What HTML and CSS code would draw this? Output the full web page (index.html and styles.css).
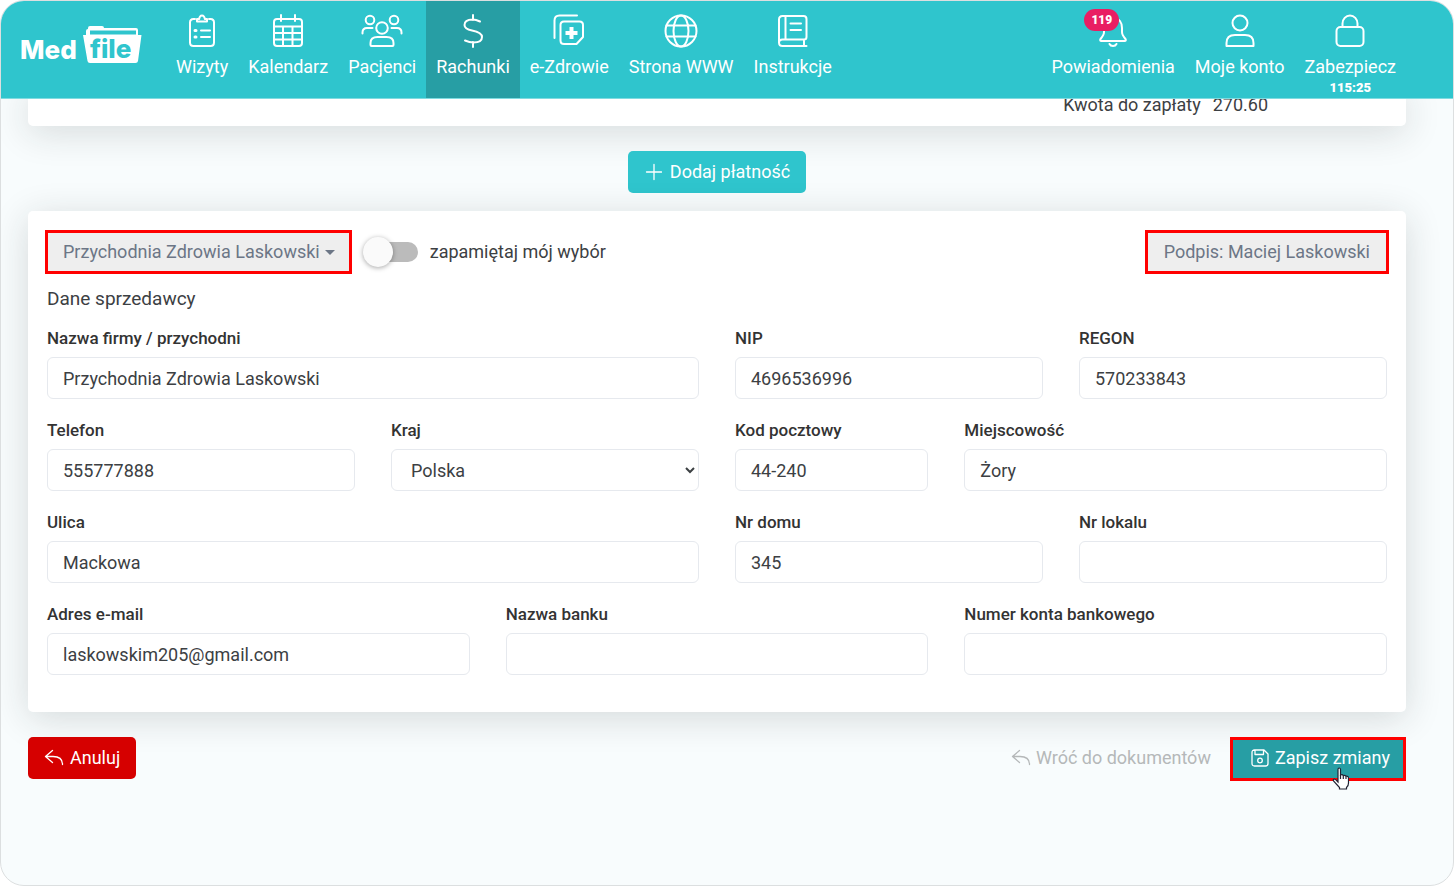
FILE: index.html
```html
<!DOCTYPE html>
<html lang="pl">
<head>
<meta charset="utf-8">
<title>MedFile – Rachunki</title>
<link rel="stylesheet" href="styles.css">
</head>
<body>
<div class="app">
  <header class="topbar">
    <a class="logo" href="#" aria-label="MedFile">
      <svg width="124" height="42" viewBox="0 0 124 42">
        <path fill="#fff" d="M65 11V7q0-2 2-2V4q0-2 2-2h12q2 0 2 2h32q2 0 2 2v5h3.500l-3.500 26q-.3 2-2.500 2H69q-2.200 0-2.500-2L62 11h3z"/>
        <path fill="#2fc5cd" d="M69 6.500h46v4H69z"/>
        <text class="logo-text" x="-1" y="35" fill="#fff">Med</text>
        <text class="logo-text" x="69" y="34" fill="#2fc5cd">file</text>
      </svg>
    </a>
    <nav class="menu">
      <a class="item" href="#">
        <svg class="icon" viewBox="0 0 34 34"><path d="M10 5H8.500Q5 5 5 8.500v20Q5 32 8.500 32h17q3.500 0 3.500-3.500v-20Q29 5 25.500 5H24M12 7.500V5h2.200a2.800 3.400 0 1 1 5.600 0H22v2.500zM16 16.500h9M16 23h9"/><path class="dots" d="M10 16.500h1M10 23h1"/></svg>
        <span>Wizyty</span>
      </a>
      <a class="item" href="#">
        <svg class="icon" viewBox="0 0 34 34"><path d="M10 1v6M24 1v6M6 5h22q3 0 3 3v21q0 3-3 3H6q-3 0-3-3V8q0-3 3-3zM3 12.500h28M3 19h28M3 25.500h28M12 12.500V32M21.500 12.500V32"/></svg>
        <span>Kalendarz</span>
      </a>
      <a class="item" href="#">
        <svg class="icon icon-wide" viewBox="0 0 42 34"><circle cx="9" cy="6" r="4.300"/><circle cx="33" cy="6" r="4.300"/><circle cx="21" cy="14" r="5.800"/><path d="M9.500 31v-2q0-6 7-6h9q7 0 7 6v2q0 1-1 1h-21q-1 0-1-1zM1.500 19.500v-1Q1.500 14 6 14h5.500M40.500 19.500v-1q0-4.500-4.500-4.500h-5.500"/></svg>
        <span>Pacjenci</span>
      </a>
      <a class="item active" href="#">
        <svg class="icon" viewBox="0 0 34 34"><path d="M17 1v5M17 28v5M24 7.500Q20 5.500 16.500 5.500 8.500 5.500 8.500 11q0 4 7.500 5.500Q26 18.500 26 23q0 5.500-8.500 5.500-4 0-8.500-2"/></svg>
        <span>Rachunki</span>
      </a>
      <a class="item" href="#">
        <svg class="icon" viewBox="0 0 34 34"><path d="M2.500 24V6.500q0-5 5-5H25M12 7.500h15.500q3.500 0 3.500 3.500v12L24.500 30H12q-3.500 0-3.500-3.500V11q0-3.500 3.500-3.500z"/><path fill="#fff" stroke="none" d="M17.500 13h4v4h4v4h-4v4h-4v-4h-4v-4h4z"/></svg>
        <span>e-Zdrowie</span>
      </a>
      <a class="item" href="#">
        <svg class="icon" viewBox="0 0 34 34"><circle cx="17" cy="17" r="15.500"/><ellipse cx="17" cy="17" rx="7.500" ry="15.500"/><path d="M2.500 11.500h29M2.500 22.500h29"/></svg>
        <span>Strona WWW</span>
      </a>
      <a class="item" href="#">
        <svg class="icon" viewBox="0 0 34 34"><path d="M30.500 32H6.500Q3 32 3 28.500v-23Q3 2 6.500 2h21Q30.500 2 30.500 5v18q0 2.500-2.500 2.500H6.500Q3 25.500 3 28.500M9.500 2v23.500M28 25.500V32M14.500 9.500H25M14.500 16H25"/></svg>
        <span>Instrukcje</span>
      </a>
    </nav>
    <nav class="menu account">
      <a class="item" href="#">
        <svg class="icon" viewBox="0 0 34 34"><path d="M17 2v2M17 4C10.500 4 8 9 8 14v4q0 3-3.500 7-1 2 1 2h23q2 0 1-2Q26 21 26 18v-4C26 9 23.500 4 17 4zM13.500 30q1 2 3.500 2t3.500-2"/></svg>
        <span class="badge">119</span>
        <span>Powiadomienia</span>
      </a>
      <a class="item" href="#">
        <svg class="icon" viewBox="0 0 34 34"><circle cx="17" cy="9" r="7.500"/><path d="M3.500 32v-3Q3.500 21 12 21h10q8.500 0 8.500 8v3z"/></svg>
        <span>Moje konto</span>
      </a>
      <a class="item" href="#">
        <svg class="icon" viewBox="0 0 34 34"><rect x="3.500" y="13" width="27" height="19" rx="4"/><path d="M9.500 13V9.500a7.500 8 0 0 1 15 0V13"/></svg>
        <span>Zabezpiecz</span>
        <strong class="timer">115:25</strong>
      </a>
    </nav>
  </header>

  <main class="content">
    <section class="card summary"><span>Kwota do zapłaty</span><span>270.60</span></section>

    <button class="btn add" type="button">
      <svg class="small" viewBox="0 0 18 18"><path d="M10 1.500v15M2.500 9h15"/></svg>Dodaj płatność
    </button>

    <form class="card seller">
      <div class="toolbar">
        <button class="choice" type="button">Przychodnia Zdrowia Laskowski<i class="caret"></i></button>
        <label class="remember"><input class="switch" type="checkbox">zapamiętaj mój wybór</label>
        <button class="choice signature" type="button">Podpis: Maciej Laskowski</button>
      </div>
      <h2 class="heading">Dane sprzedawcy</h2>
      <div class="fields">
        <label class="field span6">Nazwa firmy / przychodni<input class="control" type="text" value="Przychodnia Zdrowia Laskowski"></label>
        <label class="field span3">NIP<input class="control" type="text" value="4696536996"></label>
        <label class="field span3">REGON<input class="control" type="text" value="570233843"></label>
        <label class="field span3">Telefon<input class="control" type="tel" value="555777888"></label>
        <label class="field span3">Kraj<select class="control"><option>Polska</option></select></label>
        <label class="field span2">Kod pocztowy<input class="control" type="text" value="44-240"></label>
        <label class="field span4">Miejscowość<input class="control" type="text" value="Żory"></label>
        <label class="field span6">Ulica<input class="control" type="text" value="Mackowa"></label>
        <label class="field span3">Nr domu<input class="control" type="text" value="345"></label>
        <label class="field span3">Nr lokalu<input class="control" type="text"></label>
        <label class="field span4">Adres e-mail<input class="control" type="email" value="laskowskim205@gmail.com"></label>
        <label class="field span4">Nazwa banku<input class="control" type="text"></label>
        <label class="field span4">Numer konta bankowego<input class="control" type="text"></label>
      </div>
    </form>

    <div class="actions">
      <button class="btn cancel" type="button">
        <svg class="small reply" viewBox="0 0 20 18"><path d="M8.500 1.500 1.500 7.500 8.500 13.500M1.500 7.500H9q9.500 0 9.500 8"/></svg>Anuluj
      </button>
      <a class="back" href="#">
        <svg class="small reply" viewBox="0 0 20 18"><path d="M8.500 1.500 1.500 7.500 8.500 13.500M1.500 7.500H9q9.500 0 9.500 8"/></svg>Wróć do dokumentów
      </a>
      <button class="btn save" type="submit">
        <svg class="small" viewBox="0 0 18 18"><path d="M3.500 1H13l4 4v9.500Q17 17 14.500 17h-11Q1 17 1 14.500v-11Q1 1 3.500 1zM4 1v4.500h8.500V1"/><circle cx="9" cy="11.500" r="2.300"/></svg>Zapisz zmiany
        <svg class="pointer" viewBox="0 0 18 23"><path d="M6 14V2.500Q6 1 7.200 1T8.500 2.500V8q2-.8 2.800.5 2-.5 2.700.7 2.500-.4 2.500 2V16q0 3-2 4.500V22H7.500v-1.500L1.500 14q-.8-1.500.7-2 1.200 0 3.800 3z"/><path d="M8.500 8v4M11.300 8.500V12M14 9.200V12"/></svg>
      </button>
    </div>
  </main>
</div>
</body>
</html>
```
FILE: styles.css
```css
* { box-sizing: border-box; }

body {
  margin: 0;
  background: #fff;
  color: #3c4043;
  font-family: Roboto, sans-serif;
  font-size: 18px;
  line-height: 28px;
}

a { color: inherit; text-decoration: none; }
button, input, select { font: inherit; color: inherit; }

.app {
  min-height: 100vh;
  border: 1px solid #dcdfe0;
  border-radius: 24px;
  overflow: hidden;
  background: #f8fcfd;
}

.topbar {
  position: relative;
  z-index: 1;
  display: flex;
  height: 98px;
  padding: 0 47px 0 20px;
  border-bottom: 1px solid #7fdbe0;
  background: #2fc5cd;
  color: #fff;
}

.logo { padding-top: 23px; margin-right: 21px; }
.logo svg { display: block; }
.logo-text { font: 800 26px Inter, sans-serif; }

.menu { display: flex; }
.account { margin-left: auto; }

.item {
  position: relative;
  display: flex;
  flex-direction: column;
  align-items: center;
  padding: 13px 10px 0;
}
.item.active { background: #279ea4; }

.icon {
  width: 34px;
  height: 34px;
  margin-bottom: 5px;
  fill: none;
  stroke: #fff;
  stroke-width: 2;
  stroke-linecap: round;
  stroke-linejoin: round;
}
.icon-wide { width: 42px; }
.dots { stroke-width: 3; }

.badge {
  position: absolute;
  top: 8px;
  left: 43px;
  padding: 0 7px;
  border-radius: 11px;
  background: #e91e63;
  font-size: 12px;
  font-weight: 900;
  line-height: 22px;
}

.timer { font-size: 13px; font-weight: 900; line-height: 14px; }

.content {
  display: flex;
  flex-direction: column;
  padding: 0 47px 0 27px;
}

.card {
  border-radius: 5px;
  background: #fff;
  box-shadow: 0 6px 36px rgba(30, 40, 40, 0.16);
}

.summary {
  display: flex;
  justify-content: flex-end;
  gap: 12px;
  margin-top: -8px;
  padding: 0 138px 7px 20px;
}

.btn {
  display: flex;
  align-items: center;
  gap: 8px;
  height: 42px;
  padding: 0 16px;
  border: 0;
  border-radius: 5px;
  color: #fff;
}

.small {
  width: 18px;
  height: 18px;
  fill: none;
  stroke: currentColor;
  stroke-width: 1.3;
  stroke-linecap: round;
  stroke-linejoin: round;
}
.reply { width: 20px; }

.add {
  align-self: center;
  margin: 25px 0 18px;
  background: #2fc5cd;
}

.seller { padding: 21px 19px 37px; }

.toolbar {
  display: flex;
  align-items: center;
  margin-bottom: 13px;
}

.choice {
  display: flex;
  align-items: center;
  gap: 5px;
  height: 40px;
  padding: 0 14px 0 15px;
  border: 1px solid #f00;
  background: #eee;
  box-shadow: 0 0 0 2px #f00;
  color: #6c7686;
}
.signature { margin-left: auto; padding: 0 16px; }

.caret {
  border: 5px solid transparent;
  border-top-color: currentColor;
  border-bottom: 0;
}

.remember {
  display: flex;
  align-items: center;
  gap: 12px;
  margin-left: 20px;
}

.switch {
  appearance: none;
  position: relative;
  width: 48px;
  height: 20px;
  margin: 0;
  border-radius: 10px;
  background: #bbb;
}
.switch::before {
  content: "";
  position: absolute;
  top: -5px;
  left: -7px;
  width: 30px;
  height: 30px;
  border-radius: 50%;
  background: #fafafa;
  box-shadow: 0 1px 5px rgba(0, 0, 0, 0.35);
}

.heading {
  margin: 0 0 13px;
  font-size: 19px;
  font-weight: 400;
}

.fields {
  display: grid;
  grid-template-columns: repeat(12, minmax(0, 1fr));
  gap: 19px 36px;
}

.field {
  display: flex;
  flex-direction: column;
  gap: 7px;
  color: #333;
  font-size: 17px;
  font-weight: 500;
  line-height: 24px;
}
.span2 { grid-column: span 2; }
.span3 { grid-column: span 3; }
.span4 { grid-column: span 4; }
.span6 { grid-column: span 6; }

.control {
  width: 100%;
  height: 42px;
  padding: 0 15px;
  border: 1px solid #e6e9ee;
  border-radius: 6px;
  background: #fff;
  color: #3c4043;
  font-size: 18px;
  font-weight: 400;
}
select.control { padding-right: 2px; }

.actions {
  display: flex;
  align-items: flex-start;
  padding: 25px 0;
}

.cancel { gap: 6px; background: #d60000; }

.back {
  display: flex;
  align-items: center;
  gap: 5px;
  height: 42px;
  margin-left: auto;
  margin-right: 19px;
  color: #b5b8b9;
}

.save {
  position: relative;
  gap: 6px;
  height: 44px;
  padding: 0 13px 2px 18px;
  border: 3px solid #f00;
  border-radius: 0;
  background: #279ea4;
}

.pointer {
  position: absolute;
  top: 27px;
  right: 53px;
  width: 18px;
  height: 23px;
  fill: #fff;
  stroke: #223;
  stroke-width: 1.2;
}
```
